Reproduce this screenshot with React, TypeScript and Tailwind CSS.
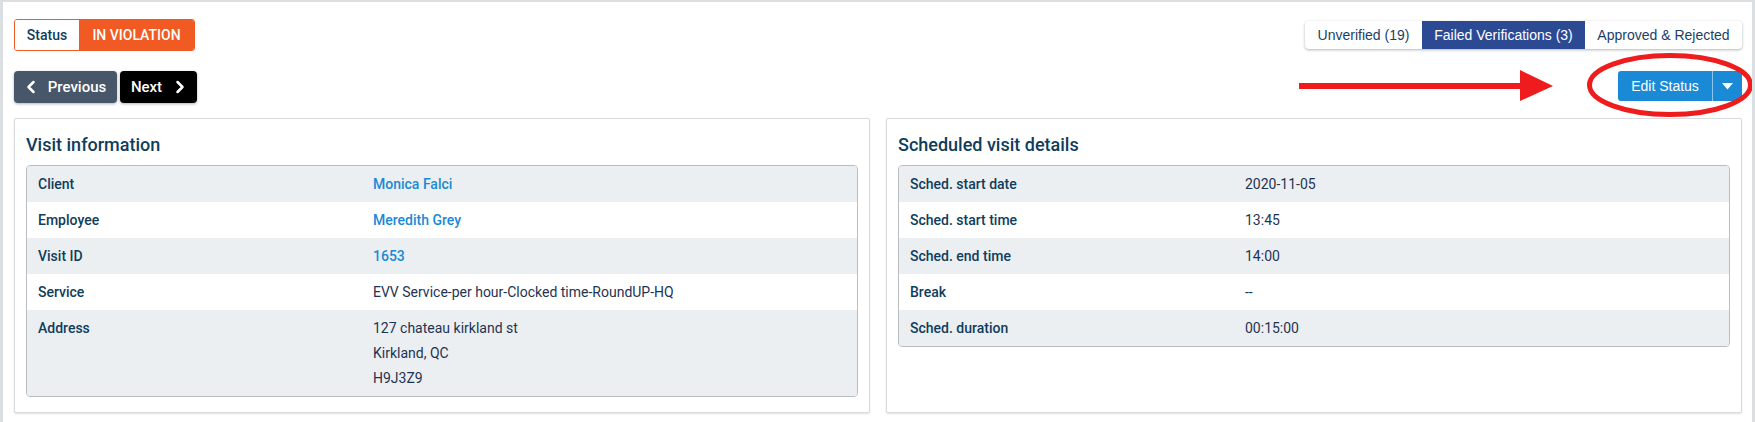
import { ChevronLeft, ChevronRight } from "lucide-react";

type Row = { label: string; value: string[]; link?: boolean };

const visitRows: Row[] = [
  { label: "Client", value: ["Monica Falci"], link: true },
  { label: "Employee", value: ["Meredith Grey"], link: true },
  { label: "Visit ID", value: ["1653"], link: true },
  { label: "Service", value: ["EVV Service-per hour-Clocked time-RoundUP-HQ"] },
  { label: "Address", value: ["127 chateau kirkland st", "Kirkland, QC", "H9J3Z9"] },
];

const schedRows: Row[] = [
  { label: "Sched. start date", value: ["2020-11-05"] },
  { label: "Sched. start time", value: ["13:45"] },
  { label: "Sched. end time", value: ["14:00"] },
  { label: "Break", value: ["--"] },
  { label: "Sched. duration", value: ["00:15:00"] },
];

function InfoPanel({ title, rows }: { title: string; rows: Row[] }) {
  return (
    <div className="flex h-[295px] flex-col rounded-[2px] border border-[#d8dadd] bg-white px-[11px] shadow-[0_1px_2px_rgba(0,0,0,0.12)]">
      <h2 className="flex h-[46px] items-end pb-[7px] text-[18px] font-medium text-[#0f3d5c]">{title}</h2>
      <div className="overflow-hidden rounded-[4px] border border-[#b9bdc2]">
        {rows.map((row, i) => (
          <div key={row.label} className={`flex py-[5.5px] text-[14px] leading-[25px] ${i % 2 === 0 ? "bg-[#eceff2]" : "bg-white"}`}>
            <div className="w-[346px] shrink-0 pl-[11px] font-medium text-[#0f3d5c]">{row.label}</div>
            <div className="flex flex-col">
              {row.value.map((v) => (
                <span key={v} className={row.link ? "font-medium text-[#1a8ad6]" : "text-[#1f3352]"}>
                  {v}
                </span>
              ))}
            </div>
          </div>
        ))}
      </div>
    </div>
  );
}

export default function App() {
  return (
    <div className="relative h-[422px] w-[1755px] overflow-hidden border-x-[3px] border-t-[2px] border-[#dcdfe2] bg-white font-['Roboto',sans-serif]">
      <div className="flex justify-between pl-[11px] pr-[10px] pt-[17px]">
        <div className="flex flex-col gap-[20px]">
          <div className="flex h-[32px] w-[181px] overflow-hidden rounded-[3px] border border-[#f15a22] text-[14px] font-medium">
            <span className="flex w-[64px] items-center justify-center bg-white text-[#0f3d5c]">Status</span>
            <span className="flex flex-1 items-center justify-center bg-[#f15a22] text-white">IN VIOLATION</span>
          </div>
          <div className="flex gap-[3px] text-[15px] font-medium text-white">
            <button className="flex h-[32px] w-[103px] items-center justify-center gap-[7px] rounded-[4px] bg-[#475668] shadow-[0_1px_3px_rgba(0,0,0,0.3)]">
              <ChevronLeft size={20} strokeWidth={3} className="-ml-[4px]" />
              Previous
            </button>
            <button className="flex h-[32px] w-[77px] items-center justify-center gap-[8px] rounded-[4px] bg-black shadow-[0_1px_3px_rgba(0,0,0,0.3)]">
              Next
              <ChevronRight size={20} strokeWidth={3} className="-mr-[4px]" />
            </button>
          </div>
        </div>

        <div className="flex flex-col items-end gap-[22px] pt-[2px] font-['Liberation_Sans',Arial,sans-serif] text-[14px]">
          <div className="flex h-[28px] overflow-hidden rounded-[4px] bg-white shadow-[0_1px_3px_rgba(0,0,0,0.3)]">
            <span className="flex w-[117px] items-center justify-center text-[#1c3f66]">Unverified (19)</span>
            <span className="flex w-[163px] items-center justify-center bg-[#2c4a94] text-white">Failed Verifications (3)</span>
            <span className="flex w-[157px] items-center justify-center text-[#1c3f66]">Approved &amp; Rejected</span>
          </div>
          <div className="flex h-[30px] overflow-hidden rounded-[3px] bg-[#1a8ad6] text-white">
            <span className="flex w-[94px] items-center justify-center">Edit Status</span>
            <span className="w-px bg-[#8cc4ea]" />
            <span className="flex w-[29px] items-center justify-center">
              <svg width="11" height="7" viewBox="0 0 11 7">
                <path d="M0 0h11L5.5 6.5z" fill="#fff" />
              </svg>
            </span>
          </div>
        </div>
      </div>

      <div className="mt-[15px] grid grid-cols-2 gap-[16px] pl-[11px] pr-[10px]">
        <InfoPanel title="Visit information" rows={visitRows} />
        <InfoPanel title="Scheduled visit details" rows={schedRows} />
      </div>

      {/* annotation: arrow + circle */}
      <svg className="pointer-events-none absolute left-0 top-0" width="1755" height="140" viewBox="3 2 1755 140">
        <rect x="1299" y="83" width="223" height="6" fill="#ee1c1c" />
        <polygon points="1520,70 1553,86 1520,101" fill="#ee1c1c" />
        <ellipse cx="1670" cy="85" rx="80.5" ry="29.5" fill="none" stroke="#ee1c1c" strokeWidth="5" />
      </svg>
    </div>
  );
}
